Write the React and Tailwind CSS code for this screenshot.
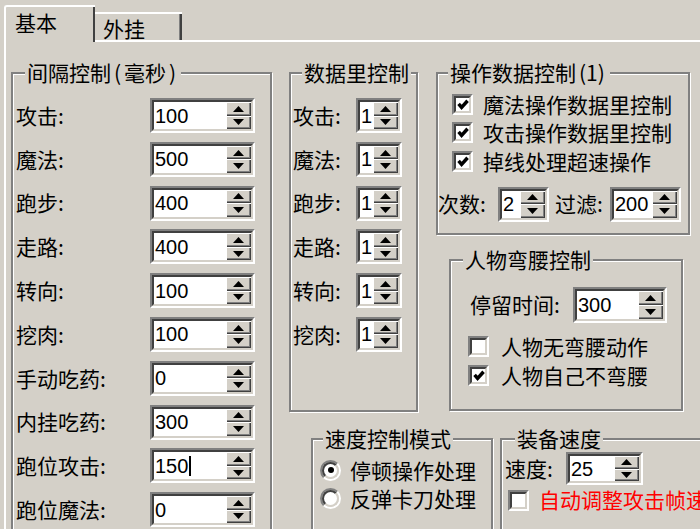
import React from 'react'

// Classic Win9x style tab page, drawn at ~2x scale

function Arrow({ down }) {
  return (
    <svg width="11" height="6" viewBox="0 0 11 6" aria-hidden="true">
      <polygon points={down ? '0,0 11,0 5.5,6' : '5.5,0 11,6 0,6'} fill="#000" />
    </svg>
  )
}

function SpinButtons() {
  return (
    <div className="flex w-[25px] flex-col">
      <div className="flex flex-1 items-center justify-center bg-[#d4d0c8] shadow-[inset_1px_1px_0_#fff,inset_-1px_-1px_0_#404040,inset_-2px_-2px_0_#808080]">
        <Arrow />
      </div>
      <div className="flex flex-1 items-center justify-center bg-[#d4d0c8] shadow-[inset_1px_1px_0_#fff,inset_-1px_-1px_0_#404040,inset_-2px_-2px_0_#808080]">
        <Arrow down />
      </div>
    </div>
  )
}

function Spin({ value, w = 'w-[105px]', h = 'h-[35px]', caret = false }) {
  return (
    <div className={`flex ${w} ${h} border-2 border-t-[#808080] border-l-[#808080] border-b-white border-r-white`}>
      <div className="flex flex-1 border-2 border-t-[#404040] border-l-[#404040] border-b-[#d4d0c8] border-r-[#d4d0c8] bg-white">
        <span className="flex flex-1 items-center pl-[1px] font-['Liberation_Sans',sans-serif] text-[20px]">
          {value}
          {caret && <span className="ml-[1px] inline-block h-[20px] w-[2px] bg-black" />}
        </span>
        <SpinButtons />
      </div>
    </div>
  )
}

function Check({ checked }) {
  return (
    <div className="flex h-[21px] w-[21px] shrink-0 border-2 border-t-[#808080] border-l-[#808080] border-b-white border-r-white">
      <div className="flex flex-1 items-center justify-center border-2 border-t-[#404040] border-l-[#404040] border-b-[#d4d0c8] border-r-[#d4d0c8] bg-white">
        {checked && (
          <svg width="12" height="11" viewBox="0 0 7 7" aria-hidden="true">
            <polyline points="0.7,3.1 2.6,5.3 6.4,1.1" fill="none" stroke="#000" strokeWidth="2.2" />
          </svg>
        )}
      </div>
    </div>
  )
}

function Radio({ checked }) {
  return (
    <div className="flex h-[21px] w-[21px] shrink-0 rounded-full border-2 border-t-[#808080] border-l-[#808080] border-b-white border-r-white">
      <div className="flex flex-1 items-center justify-center rounded-full border-2 border-t-[#404040] border-l-[#404040] border-b-[#d4d0c8] border-r-[#d4d0c8] bg-white">
        {checked && <span className="h-[6px] w-[6px] rounded-full bg-black" />}
      </div>
    </div>
  )
}

function Group({ label, labelPos, className, children }) {
  return (
    <div className={`relative shrink-0 border-2 border-[#808080] shadow-[inset_1px_1px_0_#fff,1px_1px_0_#fff] ${className}`}>
      <span className={`absolute top-[-15px] ${labelPos} whitespace-nowrap bg-[#d4d0c8] px-[2px] text-[21px] leading-[26px]`}>
        {label}
      </span>
      {children}
    </div>
  )
}

const intervals = [
  ['攻击:', '100'],
  ['魔法:', '500'],
  ['跑步:', '400'],
  ['走路:', '400'],
  ['转向:', '100'],
  ['挖肉:', '100'],
  ['手动吃药:', '0'],
  ['内挂吃药:', '300'],
  ['跑位攻击:', '150', true],
  ['跑位魔法:', '0'],
]

const amounts = ['攻击:', '魔法:', '跑步:', '走路:', '转向:', '挖肉:']

export default function App() {
  return (
    <div className="h-[529px] w-[700px] overflow-hidden bg-[#d4d0c8] font-['Noto_Sans_CJK_SC',sans-serif] text-black select-none">
      {/* Tabs */}
      <div className="flex h-[40px] items-end pl-[4px]">
        <div className="relative z-10 -mb-[2px] h-[37px] w-[91px] rounded-tl-[3px] border-l-2 border-t-2 border-white bg-[#d4d0c8] pl-[9px] pt-[2px] text-[21px] leading-[26px] shadow-[inset_-2px_0_0_#404040]">
          基本
        </div>
        <div className="h-[28px] w-[87px] border-t-2 border-white pl-[8px] pt-[1px] text-[21px] leading-[26px] shadow-[inset_-2px_0_0_#404040,inset_-3px_0_0_#808080]">
          外挂
        </div>
      </div>

      {/* Tab page */}
      <div className="ml-[4px] flex h-[489px] border-l-2 border-t-2 border-white pl-[5px] pt-[30px]">
        {/* 间隔控制 */}
        <Group
          label={<>间隔控制<span className="mx-[3px]">(</span>毫秒<span className="mx-[3px]">)</span></>}
          labelPos="left-[12px]"
          className="h-[480px] w-[261px]"
        >
          <div className="flex flex-col gap-[8.8px] pl-[3px] pt-[24px]">
            {intervals.map(([name, val, caret]) => (
              <div key={name} className="flex h-[35px] items-center">
                <span className="w-[134px] text-[21px]">{name}</span>
                <Spin value={val} caret={caret} />
              </div>
            ))}
          </div>
        </Group>

        <div className="ml-[17px] flex flex-col">
          <div className="flex items-start">
            {/* 数据里控制 */}
            <Group label="数据里控制" labelPos="left-[11px]" className="h-[340px] w-[129px]">
              <div className="flex flex-col gap-[8.8px] pl-[2px] pt-[24px]">
                {amounts.map((name) => (
                  <div key={name} className="flex h-[35px] items-center">
                    <span className="w-[63px] text-[21px]">{name}</span>
                    <Spin value="1" w="w-[46px]" />
                  </div>
                ))}
              </div>
            </Group>

            <div className="ml-[18px] flex flex-col">
              {/* 操作数据控制 */}
              <Group
                label={<>操作数据控制<span className="mx-[3px]">(1)</span></>}
                labelPos="left-[10px]"
                className="h-[163px] w-[254px]"
              >
                <div className="flex flex-col pt-[16px]">
                  {['魔法操作数据里控制', '攻击操作数据里控制', '掉线处理超速操作'].map((t) => (
                    <div key={t} className="flex h-[28.5px] items-center pl-[14px]">
                      <Check checked />
                      <span className="ml-[10px] whitespace-nowrap text-[21px]">{t}</span>
                    </div>
                  ))}
                  <div className="mt-[11px] flex h-[35px] items-center">
                    <span className="w-[60px] text-[21px]">次数:</span>
                    <Spin value="2" w="w-[51px]" />
                    <span className="ml-[6px] w-[55px] text-[21px]">过滤:</span>
                    <Spin value="200" w="w-[71px]" />
                  </div>
                </div>
              </Group>

              {/* 人物弯腰控制 */}
              <Group label="人物弯腰控制" labelPos="left-[12px]" className="ml-[13px] mt-[24px] h-[152px] w-[234px]">
                <div className="flex flex-col pt-[26px]">
                  <div className="flex h-[36px] items-center">
                    <span className="w-[122px] pl-[19px] text-[21px]">停留时间:</span>
                    <Spin value="300" w="w-[94px]" h="h-[36px]" />
                  </div>
                  <div className="mt-[9px] flex h-[29px] items-center pl-[17px]">
                    <Check />
                    <span className="ml-[12px] whitespace-nowrap text-[21px]">人物无弯腰动作</span>
                  </div>
                  <div className="flex h-[29px] items-center pl-[17px]">
                    <Check checked />
                    <span className="ml-[12px] whitespace-nowrap text-[21px]">人物自己不弯腰</span>
                  </div>
                </div>
              </Group>
            </div>
          </div>

          <div className="mt-[26px] flex items-start">
            {/* 速度控制模式 */}
            <Group label="速度控制模式" labelPos="left-[10px]" className="ml-[22px] h-[120px] w-[182px]">
              <div className="flex flex-col pt-[16px]">
                <div className="flex h-[28.5px] items-center pl-[7px]">
                  <Radio checked />
                  <span className="ml-[9px] whitespace-nowrap text-[21px]">停顿操作处理</span>
                </div>
                <div className="flex h-[28.5px] items-center pl-[7px]">
                  <Radio />
                  <span className="ml-[9px] whitespace-nowrap text-[21px]">反弹卡刀处理</span>
                </div>
              </div>
            </Group>

            {/* 装备速度 */}
            <Group label="装备速度" labelPos="left-[13px]" className="ml-[7px] h-[120px] w-[240px]">
              <div className="flex flex-col pt-[12px]">
                <div className="flex h-[33px] items-center">
                  <span className="w-[64px] pl-[3px] text-[21px]">速度:</span>
                  <Spin value="25" w="w-[77px]" h="h-[33px]" />
                </div>
                <div className="mt-[3px] flex h-[24px] items-center pl-[6px]">
                  <Check />
                  <span className="ml-[10px] whitespace-nowrap text-[21px] text-[#ff0000]">自动调整攻击帧速度</span>
                </div>
              </div>
            </Group>
          </div>
        </div>
      </div>
    </div>
  )
}
